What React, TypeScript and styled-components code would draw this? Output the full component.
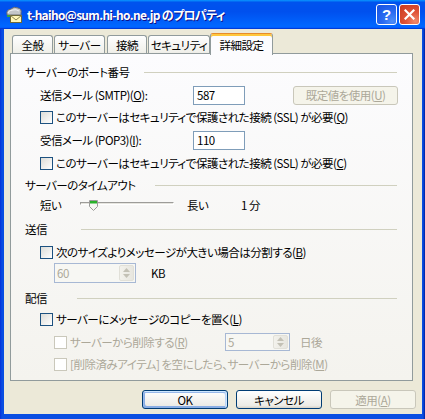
import React from "react";
import styled, { createGlobalStyle, css } from "styled-components";

const FONT = `"Noto Sans CJK JP", "Noto Sans", sans-serif`;

const Global = createGlobalStyle`
  html, body { margin: 0; padding: 0; background: #fff; }
  body { font-family: ${FONT}; font-size: 12px; }
  * { box-sizing: border-box; }
`;

const Window = styled.div`
  width: 425px;
  height: 419px;
  display: flex;
  flex-direction: column;
  background: linear-gradient(90deg, #0831d9 0, #0a4ee2 2px, #0a4ee2 calc(100% - 2px), #001ea0 100%);
  overflow: hidden;
  font-family: ${FONT};
  font-size: 11.5px;
  font-feature-settings: "palt";
  letter-spacing: -0.5px;
  color: #000;
`;

const TitleBar = styled.div`
  height: 29px;
  flex: none;
  display: flex;
  align-items: center;
  padding: 0 5px;
  background: linear-gradient(180deg, #0997ff, #0053ee 8%, #0050ee 40%, #06f 88%, #06f 93%, #005bff 95%, #003dd7 96%, #003dd7);
`;

const TitleText = styled.span`
  margin-left: 4px;
  color: #fff;
  font-weight: bold;
  font-size: 12px;
  letter-spacing: -0.7px;
  text-shadow: 1px 1px #0f1089;
  white-space: nowrap;
`;

const TitleButtons = styled.div`
  margin-left: auto;
  display: flex;
  gap: 2px;
`;

const CaptionButton = styled.div<{ $kind: "help" | "close" }>`
  width: 21px;
  height: 21px;
  border: 1px solid #fff;
  border-radius: 3px;
  display: flex;
  align-items: center;
  justify-content: center;
  color: #fff;
  font-family: "Liberation Sans", sans-serif;
  font-weight: bold;
  font-size: 15px;
  letter-spacing: 0;
  ${(p) =>
    p.$kind === "help"
      ? css`
          background: radial-gradient(circle at 80% 85%, #4c8ef8 0, #2a6cf2 40%, #1550e0 100%);
        `
      : css`
          background: radial-gradient(circle at 80% 85%, #f08a6c 0, #e0553a 40%, #c8381b 100%);
        `}
`;

const Client = styled.div`
  flex: 1;
  margin: 0 3px 5px 4px;
  background: #ece9d8;
  padding-top: 4px;
  display: flex;
  flex-direction: column;
`;

const TabStrip = styled.div`
  height: 20px;
  margin-left: 6px;
  display: flex;
  align-items: flex-end;
  position: relative;
  z-index: 2;
`;

const Tab = styled.div<{ $w: number; $ml: number; $active?: boolean }>`
  width: ${(p) => p.$w}px;
  margin-left: ${(p) => p.$ml}px;
  height: 18px;
  border: 1px solid #919b9c;
  border-bottom: none;
  border-radius: 3px 3px 0 0;
  background: linear-gradient(180deg, #fff, #fafaf9 26%, #f0f0ea 95%, #ecebe5);
  display: flex;
  align-items: center;
  justify-content: center;
  white-space: nowrap;
  ${(p) =>
    p.$active &&
    css`
      height: 22px;
      margin-bottom: -2px;
      border-top: 1px solid #e68b2c;
      box-shadow: inset 0 2px #ffc73c;
      background: #fcfcfe;
      padding-top: 1px;
    `}
`;

const Panel = styled.div`
  margin: 0 9px 0 6px;
  height: 328px;
  border: 1px solid #919b9c;
  background: linear-gradient(180deg, #fcfcfe, #f4f3ee);
  padding: 9px 15px 0 14px;
  display: flex;
  flex-direction: column;
`;

const Section = styled.div<{ $mt: number }>`
  display: flex;
  align-items: center;
  height: 18px;
  margin-top: ${(p) => p.$mt}px;
`;

const SectionLabel = styled.span<{ $w: number }>`
  width: ${(p) => p.$w}px;
  flex: none;
  white-space: nowrap;
`;

const Rule = styled.div`
  flex: 1;
  height: 1px;
  background: #d0d0bf;
`;

const Row = styled.div<{ $mt: number; $h?: number; $indent?: number }>`
  display: flex;
  align-items: center;
  height: ${(p) => p.$h ?? 18}px;
  margin-top: ${(p) => p.$mt}px;
  padding-left: ${(p) => p.$indent ?? 15}px;
  white-space: nowrap;
`;

const Label = styled.span<{ $w?: number; $disabled?: boolean; $ml?: number }>`
  ${(p) => (p.$w ? `width: ${p.$w}px; flex: none;` : "")}
  margin-left: ${(p) => p.$ml ?? 0}px;
  color: ${(p) => (p.$disabled ? "#aca899" : "#000")};
  white-space: nowrap;
`;

const Check = styled.span<{ $disabled?: boolean }>`
  width: 13px;
  height: 13px;
  flex: none;
  margin-right: 3px;
  border: 1px solid ${(p) => (p.$disabled ? "#cac8bb" : "#1c5180")};
  background: ${(p) => (p.$disabled ? "#fff" : "linear-gradient(135deg, #dcdcd7, #fff)")};
`;

const TextBox = styled.div<{ $w: number }>`
  width: ${(p) => p.$w}px;
  height: 19px;
  flex: none;
  border: 1px solid #7f9db9;
  background: #fff;
  padding-left: 3px;
  display: flex;
  align-items: center;
`;

const PushButton = styled.div<{ $w: number; $ml?: number; $disabled?: boolean; $default?: boolean }>`
  width: ${(p) => p.$w}px;
  height: 19px;
  flex: none;
  margin-left: ${(p) => p.$ml ?? 0}px;
  border-radius: 3px;
  display: flex;
  align-items: center;
  justify-content: center;
  white-space: nowrap;
  ${(p) =>
    p.$disabled
      ? css`
          border: 1px solid #c9c7ba;
          background: #f5f4ea;
          color: #aca899;
        `
      : css`
          border: 1px solid #003c74;
          background: linear-gradient(180deg, #fff, #ecebe6 86%, #d6d0c5);
          color: #000;
        `}
  ${(p) =>
    p.$default &&
    css`
      box-shadow: inset -1px 1px #cee7ff, inset 1px 2px #98b8ea, inset -2px 2px #bcd4f6, inset 1px -1px #89ade4,
        inset 2px -2px #89ade4;
    `}
`;

const Spin = styled.div<{ $w: number; $h: number }>`
  width: ${(p) => p.$w}px;
  height: ${(p) => p.$h}px;
  flex: none;
  border: 1px solid #a7b8d4;
  background: #f7f7f3;
  padding: 1px;
  display: flex;
`;

const SpinValue = styled.span`
  flex: 1;
  color: #aca899;
  padding-left: 1px;
  display: flex;
  align-items: center;
`;

const SpinButtons = styled.div`
  width: 15px;
  display: flex;
  flex-direction: column;
  align-items: center;
  justify-content: center;
  gap: 2px;
  border-radius: 2px;
  background: linear-gradient(90deg, #f3f2ec, #e7e6df);
  border: 1px solid #e1e0d8;
`;

const SliderBox = styled.div`
  width: 94px;
  height: 18px;
  flex: none;
  position: relative;
`;

const Track = styled.div`
  position: absolute;
  left: 0;
  right: 0;
  top: 6px;
  height: 3px;
  border-top: 1px solid #9d9c99;
  border-left: 1px solid #9d9c99;
  border-bottom: 1px solid #fff;
  border-right: 1px solid #fff;
  background: #e6e5df;
`;

const Thumb = styled.svg`
  position: absolute;
  left: 9px;
  top: 4px;
`;

const ButtonBar = styled.div`
  display: flex;
  justify-content: flex-end;
  gap: 8px;
  margin-top: 9px;
  padding-right: 6px;
`;

const Arrow = ({ up }: { up?: boolean }) => (
  <svg width="7" height="4" viewBox="0 0 7 4">
    <path d={up ? "M0 4 L3.5 0 L7 4 Z" : "M0 0 L3.5 4 L7 0 Z"} fill="#c3c1b5" />
  </svg>
);

const Spinner = ({ w, h, value }: { w: number; h: number; value: string }) => (
  <Spin $w={w} $h={h}>
    <SpinValue>{value}</SpinValue>
    <SpinButtons>
      <Arrow up />
      <Arrow />
    </SpinButtons>
  </Spin>
);

const AppIcon = () => (
  <svg width="18" height="18" viewBox="0 0 18 18">
    <path d="M2 8 Q1 4 6 3 Q9 0 13 2 Q17 3 16 7 L16 9 L2 9 Z" fill="#c4c6c8" stroke="#6b6e72" strokeWidth="1" />
    <path d="M3 7 Q4 4 8 4 Q11 3 14 5" fill="none" stroke="#eef0f2" strokeWidth="1" />
    <rect x="5.5" y="9.5" width="11" height="7" fill="#fff7b8" stroke="#6e6a3a" />
    <path d="M5.5 9.5 L11 14 L16.5 9.5" fill="none" stroke="#8a8450" />
    <rect x="2" y="9" width="3" height="2" fill="#39a33b" />
  </svg>
);

export default function App() {
  return (
    <>
      <Global />
      <Window>
        <TitleBar>
          <AppIcon />
          <TitleText>t-haiho@sum.hi-ho.ne.jp のプロパティ</TitleText>
          <TitleButtons>
            <CaptionButton $kind="help">?</CaptionButton>
            <CaptionButton $kind="close">
              <svg width="11" height="11" viewBox="0 0 11 11">
                <path d="M1.5 1.5 L9.5 9.5 M9.5 1.5 L1.5 9.5" stroke="#fff" strokeWidth="2.2" strokeLinecap="square" />
              </svg>
            </CaptionButton>
          </TitleButtons>
        </TitleBar>
        <Client>
          <TabStrip>
            <Tab $w={41} $ml={2}>全般</Tab>
            <Tab $w={51} $ml={1}>サーバー</Tab>
            <Tab $w={40} $ml={2}>接続</Tab>
            <Tab $w={62} $ml={1}>セキュリティ</Tab>
            <Tab $w={63} $ml={0} $active>詳細設定</Tab>
          </TabStrip>
          <Panel>
            <Section $mt={0}>
              <SectionLabel $w={119}>サーバーのポート番号</SectionLabel>
              <Rule />
            </Section>
            <Row $mt={4} $h={20}>
              <Label $w={153}>送信メール (SMTP)(<u>O</u>):</Label>
              <TextBox $w={52}>587</TextBox>
              <PushButton $w={105} $ml={48} $disabled>
                既定値を使用(<u>U</u>)
              </PushButton>
            </Row>
            <Row $mt={3}>
              <Check />
              <Label>
                このサーバーはセキュリティで保護された接続 (SSL) が必要(<u>Q</u>)
              </Label>
            </Row>
            <Row $mt={4} $h={20}>
              <Label $w={153}>受信メール (POP3)(<u>I</u>):</Label>
              <TextBox $w={52}>110</TextBox>
            </Row>
            <Row $mt={4}>
              <Check />
              <Label>
                このサーバーはセキュリティで保護された接続 (SSL) が必要(<u>C</u>)
              </Label>
            </Row>
            <Section $mt={4}>
              <SectionLabel $w={130}>サーバーのタイムアウト</SectionLabel>
              <Rule />
            </Section>
            <Row $mt={2}>
              <Label $w={40}>短い</Label>
              <SliderBox>
                <Track />
                <Thumb width="9" height="11" viewBox="0 0 9 11">
                  <path d="M0.5 0.5 H8.5 V6.5 L4.5 10.5 L0.5 6.5 Z" fill="#f7f7f4" stroke="#9a9a98" />
                  <rect x="1" y="1" width="7" height="2.5" fill="#29b12b" />
                </Thumb>
              </SliderBox>
              <Label $w={54} $ml={13}>長い</Label>
              <Label>1 分</Label>
            </Row>
            <Section $mt={6}>
              <SectionLabel $w={56}>送信</SectionLabel>
              <Rule />
            </Section>
            <Row $mt={5}>
              <Check />
              <Label>
                次のサイズよりメッセージが大きい場合は分割する(<u>B</u>)
              </Label>
            </Row>
            <Row $mt={2} $h={20} $indent={29}>
              <Spinner w={82} h={20} value="60" />
              <Label $ml={15}>KB</Label>
            </Row>
            <Section $mt={6}>
              <SectionLabel $w={52}>配信</SectionLabel>
              <Rule />
            </Section>
            <Row $mt={3}>
              <Check />
              <Label>
                サーバーにメッセージのコピーを置く(<u>L</u>)
              </Label>
            </Row>
            <Row $mt={5} $indent={29}>
              <Check $disabled />
              <Label $w={155} $disabled>
                サーバーから削除する(<u>R</u>)
              </Label>
              <Spinner w={65} h={18} value="5" />
              <Label $ml={10} $disabled>
                日後
              </Label>
            </Row>
            <Row $mt={4} $indent={29}>
              <Check $disabled />
              <Label $disabled>
                [削除済みアイテム] を空にしたら、サーバーから削除(<u>M</u>)
              </Label>
            </Row>
          </Panel>
          <ButtonBar>
            <PushButton $w={86} $default>
              OK
            </PushButton>
            <PushButton $w={86}>キャンセル</PushButton>
            <PushButton $w={86} $disabled>
              適用(<u>A</u>)
            </PushButton>
          </ButtonBar>
        </Client>
      </Window>
    </>
  );
}
